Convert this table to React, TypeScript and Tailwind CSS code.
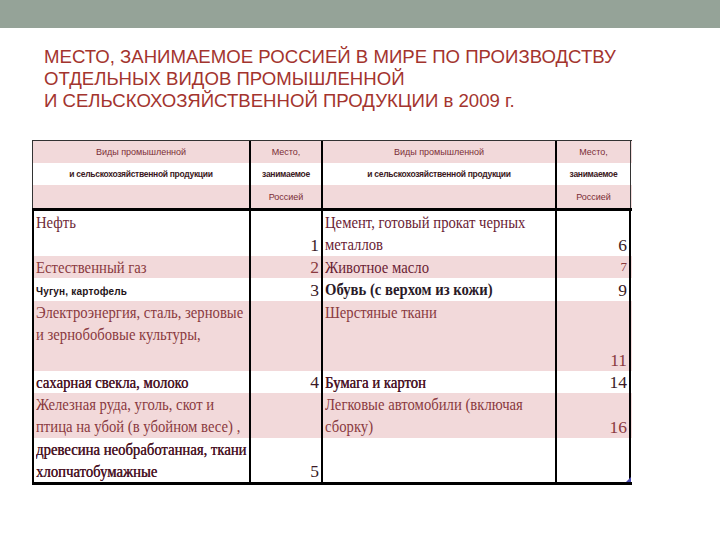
const serif = { fontFamily: '"Liberation Serif", "Times New Roman", serif' };
const narrow = { fontFamily: '"Liberation Sans Narrow", "Liberation Sans", Arial, sans-serif' };

type Row = {
  h: string;
  pink: boolean;
  left: React.ReactNode;
  leftNum?: string;
  right?: React.ReactNode;
  rightNum?: string;
};

const squeeze = "origin-left scale-x-[0.84] whitespace-nowrap text-[17.5px]";
const dark = `${squeeze} text-[#4a1426]`;
const light = `${squeeze} text-[#8a3a40]`;

const rows: Row[] = [
  {
    h: "h-[45px]",
    pink: false,
    left: <div className={`${squeeze} text-[#6e2a38]`}>Нефть</div>,
    leftNum: "1",
    right: (
      <div className={`${squeeze} text-[#6a2234]`}>
        Цемент, готовый прокат черных
        <br />
        металлов
      </div>
    ),
    rightNum: "6",
  },
  {
    h: "h-[22px]",
    pink: true,
    left: <div className={light}>Естественный газ</div>,
    leftNum: "2",
    right: <div className={`${squeeze} text-[#6a2234]`}>Животное масло</div>,
    rightNum: "7",
  },
  {
    h: "h-[23px]",
    pink: false,
    left: (
      <div className="pt-[3px] text-[10px] font-bold tracking-[0.2px] text-[#1f1418]" style={narrow}>
        Чугун, картофель
      </div>
    ),
    leftNum: "3",
    right: <div className={`${squeeze} font-semibold text-[#2a1a28]`}>Обувь (с верхом из кожи)</div>,
    rightNum: "9",
  },
  {
    h: "h-[70px]",
    pink: true,
    left: (
      <div className={light}>
        Электроэнергия, сталь, зерновые
        <br />и зернобобовые культуры,
      </div>
    ),
    right: <div className={light}>Шерстяные ткани</div>,
    rightNum: "11",
  },
  {
    h: "h-[22px]",
    pink: false,
    left: <div className={`${dark} [text-shadow:0.4px_0_0_#4a1426]`}>сахарная свекла, молоко</div>,
    leftNum: "4",
    right: <div className={`${dark} [text-shadow:0.4px_0_0_#4a1426]`}>Бумага и картон</div>,
    rightNum: "14",
  },
  {
    h: "h-[45px]",
    pink: true,
    left: (
      <div className={light}>
        Железная руда, уголь, скот и
        <br />
        птица на убой (в убойном весе) ,
      </div>
    ),
    right: (
      <div className={light}>
        Легковые автомобили (включая
        <br />
        сборку)
      </div>
    ),
    rightNum: "16",
  },
  {
    h: "h-[44px]",
    pink: false,
    left: (
      <div className={`${dark} [text-shadow:0.4px_0_0_#4a1426]`}>
        древесина необработанная, ткани
        <br />
        хлопчатобумажные
      </div>
    ),
    leftNum: "5",
  },
];

function NumCell({ n, pink, small, last }: { n?: string; pink: boolean; small?: boolean; last?: boolean }) {
  return (
    <div
      className={`flex ${last ? "w-[74px]" : "w-[72px]"} items-end justify-end border-r-2 border-black pr-[2px] ${
        small ? "text-[13px]" : "text-[17.5px]"
      } leading-[22px] ${pink ? "text-[#8a3a40]" : "text-[#3a1a26]"}`}
    >
      {n}
    </div>
  );
}

function HeaderRow({ pink, a, b, bold, h }: { pink: boolean; a: string; b: string; bold?: boolean; h: string }) {
  const tone = bold
    ? "text-[8.5px] font-bold tracking-[-0.3px] text-[#3b1822]"
    : "text-[9px] text-[#7b2e36]";
  return (
    <div className={`flex ${h} ${pink ? "bg-[#f2d9da]" : "bg-white"}`}>
      <div className={`flex w-[218px] items-center justify-center border-r-2 border-black ${tone}`}>{a}</div>
      <div className={`flex w-[72px] items-center justify-center border-r-2 border-black ${tone}`}>{b}</div>
      <div className={`flex w-[234px] items-center justify-center border-r-2 border-black ${tone}`}>{a}</div>
      <div className={`flex w-[74px] items-center justify-center border-r border-[#333] ${tone}`}>{b}</div>
    </div>
  );
}

export default function App() {
  return (
    <div className="h-[540px] w-[720px] overflow-hidden bg-white">
      <div className="h-[28px] bg-[#95a398]" />
      <div
        className="mt-[18px] pl-[44px] text-[18.6px] leading-[22px] text-[#a3342e]"
        style={narrow}
      >
        МЕСТО, ЗАНИМАЕМОЕ РОССИЕЙ В МИРЕ ПО ПРОИЗВОДСТВУ
        <br />
        ОТДЕЛЬНЫХ ВИДОВ ПРОМЫШЛЕННОЙ
        <br />И СЕЛЬСКОХОЗЯЙСТВЕННОЙ ПРОДУКЦИИ в 2009 г.
      </div>

      <div className="relative ml-[32px] mt-[28px] w-[600px]">
        <div className="border-l border-t border-[#333] leading-[12px]" style={narrow}>
          <HeaderRow h="h-[22px]" pink a="Виды промышленной" b="Место," />
          <HeaderRow h="h-[22px]" pink={false} bold a="и сельскохозяйственной продукции" b="занимаемое" />
          <HeaderRow h="h-[23px]" pink a="" b="Россией" />
        </div>
        <div className="border-b-[3px] border-l-2 border-t-[3px] border-black" style={serif}>
          {rows.map((r, i) => (
            <div key={i} className={`flex ${r.h} ${r.pink ? "bg-[#f2d9da]" : "bg-white"}`}>
              <div className="w-[217px] border-r-2 border-black pl-[2px] leading-[22px]">{r.left}</div>
              <NumCell n={r.leftNum} pink={r.pink} />
              <div className="w-[234px] border-r-2 border-black pl-[2px] leading-[22px]">{r.right}</div>
              <NumCell n={r.rightNum} pink={r.pink} small={r.rightNum === "7"} last />
            </div>
          ))}
        </div>
        <svg className="absolute bottom-[3px] right-[1px]" width="5" height="5" viewBox="0 0 5 5">
          <polygon points="5,0 5,5 0,5" fill="#4a4ab0" />
        </svg>
      </div>
    </div>
  );
}
